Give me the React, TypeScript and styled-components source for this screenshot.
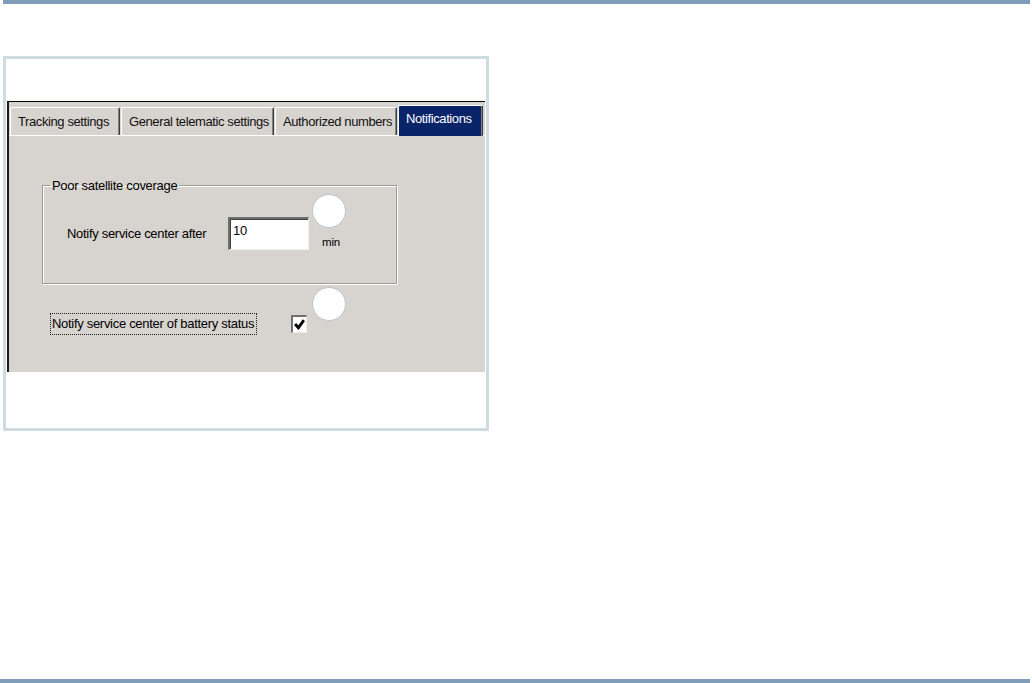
import React, { FC } from "react";
import styled, { createGlobalStyle } from "styled-components";

const GlobalStyle = createGlobalStyle`
  html, body {
    margin: 0;
    padding: 0;
    background: #ffffff;
  }
  body {
    font-family: "Liberation Sans", Arial, sans-serif;
    color: #000000;
  }
`;

const Page = styled.div`
  width: 1032px;
  height: 683px;
  display: flex;
  flex-direction: column;
  overflow: hidden;
`;

const Rule = styled.div<{ $inset: number }>`
  height: 4px;
  margin-left: ${(p) => p.$inset}px;
  margin-right: 2px;
  background: #7f9cb9;
  flex-shrink: 0;
`;

const BottomRule = styled(Rule)`
  margin-top: auto;
`;

const Frame = styled.div`
  box-sizing: border-box;
  width: 486px;
  height: 375px;
  margin: 52px 0 0 3px;
  border: 3px solid #cedce2;
  background: #ffffff;
  padding: 42px 0 0 1px;
`;

const Screenshot = styled.div`
  position: relative;
  box-sizing: border-box;
  width: 478px;
  height: 271px;
  background: #d7d3cf;
  border-top: 1px solid #000000;
  border-left: 2px solid #1a1a1a;
  display: flex;
  flex-direction: column;
  font-size: 13px;
  letter-spacing: -0.3px;
`;

const TabStrip = styled.div`
  display: flex;
  align-items: flex-end;
  height: 34px;
  padding-left: 1px;
  border-bottom: 1px solid #ffffff;
  box-sizing: border-box;
`;

const Tab = styled.div<{ $width: number; $active?: boolean }>`
  box-sizing: border-box;
  width: ${(p) => p.$width}px;
  height: ${(p) => (p.$active ? 31 : 28)}px;
  margin-bottom: ${(p) => (p.$active ? -1 : 0)}px;
  margin-right: ${(p) => (p.$active ? 0 : 1)}px;
  padding: ${(p) => (p.$active ? "5px 0 0 7px" : "6px 0 0 7px")};
  background: ${(p) => (p.$active ? "#0a246a" : "#d7d3cf")};
  color: ${(p) => (p.$active ? "#ffffff" : "#111111")};
  border-top: 1px solid #ffffff;
  border-left: 1px solid #ffffff;
  border-right: 1px solid #404040;
  border-radius: 2px 2px 0 0;
  box-shadow: inset -1px 0 0 #808080;
  white-space: nowrap;
  overflow: hidden;
  letter-spacing: -0.4px;
`;

const TabBody = styled.div`
  flex: 1;
  padding: 42px 0 0 33px;
  display: flex;
  flex-direction: column;
`;

const GroupBox = styled.fieldset`
  box-sizing: border-box;
  width: 355px;
  height: 106px;
  margin: 0;
  padding: 0;
  border: 1px solid #9e9a96;
  box-shadow: inset 1px 1px 0 #ffffff, 1px 1px 0 #ffffff;
`;

const Legend = styled.legend`
  margin-left: 7px;
  padding: 0 2px;
  line-height: 15px;
`;

const FieldRow = styled.div`
  display: flex;
  align-items: center;
  margin-top: 24px;
  padding-left: 24px;
`;

const FieldLabel = styled.span`
  width: 161px;
`;

const TextInput = styled.div`
  box-sizing: border-box;
  width: 81px;
  height: 33px;
  padding: 4px 0 0 3px;
  background: #ffffff;
  border-top: 2px solid #6e6e6e;
  border-left: 2px solid #6e6e6e;
  border-right: 1px solid #f4f2f0;
  border-bottom: 1px solid #f4f2f0;
  box-shadow: inset 1px 1px 0 #404040;
  font-size: 13px;
`;

const Unit = styled.span`
  align-self: flex-end;
  margin: 0 0 2px 13px;
  font-size: 11.5px;
  letter-spacing: -0.2px;
`;

const CheckRow = styled.div`
  display: flex;
  align-items: center;
  margin: 29px 0 0 8px;
`;

const FocusLabel = styled.span`
  box-sizing: border-box;
  width: 207px;
  height: 22px;
  line-height: 20px;
  padding-left: 1px;
  border: 1px dotted #202020;
  white-space: nowrap;
`;

const CheckBox = styled.div`
  box-sizing: border-box;
  width: 16px;
  height: 18px;
  margin-left: 34px;
  background: #ffffff;
  border-top: 2px solid #707070;
  border-left: 2px solid #707070;
  border-right: 1px solid #f0eeec;
  border-bottom: 1px solid #f0eeec;
  display: flex;
  align-items: center;
  justify-content: center;
`;

const Callout = styled.div<{ $top: number }>`
  position: absolute;
  left: 303px;
  top: ${(p) => p.$top}px;
  width: 34px;
  height: 34px;
  box-sizing: border-box;
  border-radius: 50%;
  background: #ffffff;
  border: 1px solid #b9c6ce;
`;

const tabs = [
  { label: "Tracking settings", width: 110 },
  { label: "General telematic settings", width: 153 },
  { label: "Authorized numbers", width: 122 },
  { label: "Notifications", width: 85, active: true },
];

const App: FC = () => {
  return (
    <Page>
      <GlobalStyle />
      <Rule $inset={3} />
      <Frame>
        <Screenshot>
          <TabStrip>
            {tabs.map((t) => (
              <Tab key={t.label} $width={t.width} $active={t.active}>
                {t.label}
              </Tab>
            ))}
          </TabStrip>
          <TabBody>
            <GroupBox>
              <Legend>Poor satellite coverage</Legend>
              <FieldRow>
                <FieldLabel>Notify service center after</FieldLabel>
                <TextInput>10</TextInput>
                <Unit>min</Unit>
              </FieldRow>
            </GroupBox>
            <CheckRow>
              <FocusLabel>Notify service center of battery status</FocusLabel>
              <CheckBox>
                <svg width="11" height="11" viewBox="0 0 10 10">
                  <path d="M1 4.5 L4 8 L9 1" stroke="#000" strokeWidth="2.6" fill="none" />
                </svg>
              </CheckBox>
            </CheckRow>
          </TabBody>
          <Callout $top={92} />
          <Callout $top={185} />
        </Screenshot>
      </Frame>
      <BottomRule $inset={0} />
    </Page>
  );
};

export default App;
